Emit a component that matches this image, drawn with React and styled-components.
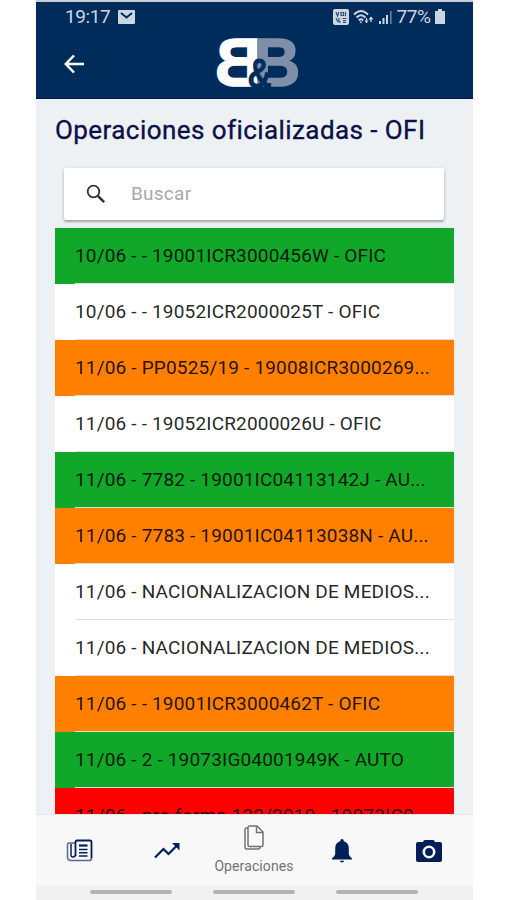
import React from 'react';
import styled, { createGlobalStyle, css } from 'styled-components';

const GlobalStyle = createGlobalStyle`
  * {
    box-sizing: border-box;
  }

  body {
    margin: 0;
    background: #ffffff;
    font-family: Roboto, 'Liberation Sans', sans-serif;
  }
`;

const Screen = styled.div`
  display: flex;
  flex-direction: column;
  width: 437px;
  height: 900px;
  margin-left: 36px;
  overflow: hidden;
  background: #eef1f4;
`;

const Header = styled.header`
  flex: none;
  height: 99px;
  background: #002c5c;
  border-top: 2px solid #c9cdd3;
  border-bottom: 1px solid #0a1550;
`;

const StatusBar = styled.div`
  display: flex;
  justify-content: space-between;
  align-items: center;
  height: 29px;
  padding: 0 28px 0 29px;
  color: #ccd5e2;
  font-size: 19px;
`;

const StatusGroup = styled.div`
  display: flex;
  align-items: center;
  gap: ${({ $gap }) => $gap}px;
`;

const Clock = styled.span`
  letter-spacing: -0.4px;
`;

const Toolbar = styled.div`
  display: grid;
  grid-template-columns: 1fr auto 1fr;
  align-items: center;
  height: 66px;
  padding: 0 24px 0 27px;
`;

const BackButton = styled.button`
  display: flex;
  padding: 0;
  border: 0;
  background: none;
`;

const LogoMark = styled.svg`
  overflow: visible;
  font-family: 'Liberation Sans', sans-serif;
  font-weight: 700;
`;

const Content = styled.main`
  flex: 1;
  min-height: 0;
  padding: 0 19px;
  overflow: hidden;
`;

const Title = styled.h1`
  margin: 0;
  height: 69px;
  padding-top: 15px;
  color: #0b1148;
  font-size: 26px;
  font-weight: 400;
  line-height: 32px;
  letter-spacing: 0.43px;
  -webkit-text-stroke: 0.35px #0b1148;
  white-space: nowrap;
`;

const SearchBox = styled.label`
  display: flex;
  align-items: center;
  gap: 25px;
  height: 52px;
  margin: 0 10px 8px 9px;
  padding-left: 22px;
  background: #ffffff;
  border-radius: 2px;
  box-shadow: 0 2px 2px rgba(0, 0, 0, 0.24), 0 1px 4px rgba(0, 0, 0, 0.14);
`;

const SearchInput = styled.input`
  flex: 1;
  min-width: 0;
  padding: 0 0 1px;
  border: 0;
  outline: 0;
  background: none;
  font-family: inherit;
  font-size: 19px;
  letter-spacing: 0.25px;

  &::placeholder {
    color: #a9a9a9;
    opacity: 1;
  }
`;

const List = styled.ul`
  margin: 0;
  padding: 0;
  list-style: none;
`;

const rowColors = {
  green: '#11a829',
  orange: '#ff8000',
  red: '#ff0000',
  white: '#ffffff',
};

const Row = styled.li`
  height: 56px;
  padding-left: 20px;
  background: ${({ $status }) => rowColors[$status]};
`;

const RowLabel = styled.div`
  height: 56px;
  border-bottom: 1px solid #dedede;
  color: rgba(0, 0, 0, 0.87);
  font-size: 19px;
  line-height: 55px;
  letter-spacing: 0.18px;
  white-space: nowrap;
`;

const TabBar = styled.nav`
  flex: none;
  display: grid;
  grid-template-columns: repeat(5, 1fr);
  height: 72px;
  background: #f8f8f8;
  border-top: 1px solid #e4e5e7;
`;

const Tab = styled.button`
  display: flex;
  flex-direction: column;
  align-items: center;
  justify-content: center;
  padding: 0;
  border: 0;
  background: none;
  color: #001f56;
  font-family: inherit;

  ${({ $active }) =>
    $active &&
    css`
      justify-content: flex-start;
      padding: 10px 1px 0 0;
      gap: 7px;
      color: #737373;
    `}
`;

const TabLabel = styled.span`
  font-size: 14px;
  line-height: 18px;
  letter-spacing: 0.1px;
`;

const SystemNav = styled.div`
  flex: none;
  display: flex;
  justify-content: center;
  gap: 41px;
  height: 14px;
  padding: 4px 1px 0 0;
  background: #f1f1f1;
`;

const NavHandle = styled.span`
  width: 82px;
  height: 4px;
  border-radius: 2px;
  background: #b3b3b3;
`;

const operations = [
  { status: 'green', text: '10/06 - - 19001ICR3000456W - OFIC' },
  { status: 'white', text: '10/06 - - 19052ICR2000025T - OFIC' },
  { status: 'orange', text: '11/06 - PP0525/19 - 19008ICR3000269...' },
  { status: 'white', text: '11/06 - - 19052ICR2000026U - OFIC' },
  { status: 'green', text: '11/06 - 7782 - 19001IC04113142J - AU...' },
  { status: 'orange', text: '11/06 - 7783 - 19001IC04113038N - AU...' },
  { status: 'white', text: '11/06 - NACIONALIZACION DE MEDIOS...' },
  { status: 'white', text: '11/06 - NACIONALIZACION DE MEDIOS...' },
  { status: 'orange', text: '11/06 - - 19001ICR3000462T - OFIC' },
  { status: 'green', text: '11/06 - 2 - 19073IG04001949K - AUTO' },
  { status: 'red', text: '11/06 - pro forma 132/2019 - 19073IC0' },
];

const MailIcon = () => (
  <svg width="17" height="14" viewBox="0 0 17 14">
    <rect width="17" height="14" rx="1" fill="#ccd5e2" />
    <path d="M3 3l5.5 4.5L14 3" fill="none" stroke="#002c5c" strokeWidth="2" />
  </svg>
);

const VolteIcon = () => (
  <svg width="16" height="16" viewBox="0 0 16 16">
    <rect width="16" height="16" rx="2" fill="#ccd5e2" />
    <g fill="none" stroke="#31527b" strokeWidth="1.2">
      <path d="M3 3l1.5 4L6 3M8 3.5h2.5v3H8zM12.5 3v4M3 9l2 4M6 9v4h2M9.5 9.5h4M10 11.5h3M10 13.3h3" />
    </g>
  </svg>
);

const WifiIcon = () => (
  <svg width="21" height="16" viewBox="0 0 21 16">
    <g fill="none" stroke="#ccd5e2" strokeWidth="1.9">
      <path d="M1 5.5q7-7 14 0M3.5 8.5q4.5-4.5 9 0M5.8 11.2q2.2-2 4.4 0" />
    </g>
    <path d="M6.5 12.5h3L8 14.5z" fill="#ccd5e2" />
    <path d="M13.5 9v5M18 8v5" stroke="#ccd5e2" strokeWidth="1.3" />
    <path d="M15.5 10.5h5L18 7.5zM11.5 11.5h4L13.5 14z" fill="#ccd5e2" />
  </svg>
);

const SignalIcon = () => (
  <svg width="13" height="14" viewBox="0 0 13 14">
    <path d="M1 11v3M4.5 8v6M8 5v9" stroke="#ccd5e2" strokeWidth="2" />
    <path d="M11.8 1v13" stroke="#71859f" strokeWidth="1.5" />
  </svg>
);

const BatteryIcon = () => (
  <svg width="10" height="15" viewBox="0 0 10 15">
    <path d="M3 0h4v2h3v13H0V2h3z" fill="#ccd5e2" />
  </svg>
);

const BackIcon = () => (
  <svg width="22" height="22" viewBox="0 0 22 22">
    <path d="M11 2.5L2.8 11l8.2 8.5M3 11h18" fill="none" stroke="#fff" strokeWidth="2.5" />
  </svg>
);

const Logo = () => (
  <LogoMark width="92" height="58" viewBox="0 0 92 58">
    <g fontSize="69" strokeWidth="1.6">
      <text transform="translate(51.4 50.7) scale(-0.94 1)" fill="#fff" stroke="#fff">B</text>
      <text transform="translate(43.6 50.7) scale(0.94 1)" fill="#7f8fa9" stroke="#7f8fa9">B</text>
    </g>
    <text
      transform="translate(37.5 52.5) scale(0.78 1)"
      fontSize="43"
      fill="#002c5c"
      stroke="#002c5c"
      strokeWidth="0.8"
    >
      &amp;
    </text>
  </LogoMark>
);

const SearchIcon = () => (
  <svg width="20" height="20" viewBox="0 0 20 20">
    <circle cx="7.5" cy="7.5" r="5.8" fill="none" stroke="#333" strokeWidth="1.8" />
    <path d="M11.8 11.8l6.4 6.4" stroke="#333" strokeWidth="2.6" />
  </svg>
);

const NewsIcon = () => (
  <svg width="27" height="23" viewBox="0 0 27 23" fill="none" stroke="currentColor">
    <path d="M9.5 4H3Q1.5 4 1.5 5.5V18q0 3.5 3.500 3.500" stroke="#59678f" strokeWidth="1.5" />
    <path d="M5 5v11q0 2 2 2t2.5-2" strokeWidth="1.5" />
    <path d="M5 21.5h18q2.5 0 2.5-2.5" stroke="#59678f" strokeWidth="1.7" />
    <path d="M9.5 17V3q0-1.5 1.5-1.5h13q1.5 0 1.5 1.5v16" strokeWidth="1.8" />
    <path d="M13 6.5h8.5" strokeWidth="2.2" />
    <path d="M13 10.5h8.5M13 13.8h8.5M13 17h8.5" strokeWidth="1.5" />
  </svg>
);

const TrendIcon = () => (
  <svg width="26" height="16" viewBox="0 0 26 16">
    <path d="M1 14.5l8.5-8.5 5 5L23 2.5" fill="none" stroke="currentColor" strokeWidth="2.2" />
    <path d="M18 0h7.5v7.5z" fill="currentColor" />
  </svg>
);

const DocumentsIcon = () => (
  <svg width="20" height="25" viewBox="0 0 20 25" fill="none" stroke="currentColor" strokeWidth="1.5">
    <path d="M4 3H2.5Q1 3 1 4.5v18Q1 24 2.5 24h12q1.5 0 1.5-2" />
    <path d="M5.5 1H13l6 6v13q0 1.5-1.5 1.5h-12Q4 21.5 4 20V2.5Q4 1 5.5 1z" />
    <path d="M12.5 1v6.5H19" />
  </svg>
);

const BellIcon = () => (
  <svg width="20" height="24" viewBox="0 0 20 24" fill="currentColor">
    <path d="M10 0q1.8 0 1.8 2.2 5 1.3 5 7.3v5.5q0 2 3.2 4.5v1H0v-1q3.2-2.5 3.2-4.5V9.5q0-6 5-7.3Q8.2 0 10 0zM7.8 21.7h4.4Q11.8 23.5 10 23.5t-2.2-1.8z" />
  </svg>
);

const CameraIcon = () => (
  <svg width="26" height="22" viewBox="0 0 26 22">
    <path d="M7 2q.5-2 2-2h8q1.5 0 2 2h5q2 0 2 2v16q0 2-2 2H2q-2 0-2-2V4q0-2 2-2z" fill="currentColor" />
    <circle cx="13" cy="12" r="5.2" fill="none" stroke="#f8f8f8" strokeWidth="2.6" />
  </svg>
);

const App = () => {
  return (
    <>
      <GlobalStyle />
      <Screen>
        <Header>
          <StatusBar>
            <StatusGroup $gap={8}>
              <Clock>19:17</Clock>
              <MailIcon />
            </StatusGroup>
            <StatusGroup $gap={4.5}>
              <VolteIcon />
              <WifiIcon />
              <SignalIcon />
              <Clock>77%</Clock>
              <BatteryIcon />
            </StatusGroup>
          </StatusBar>
          <Toolbar>
            <BackButton aria-label="Volver">
              <BackIcon />
            </BackButton>
            <Logo />
          </Toolbar>
        </Header>

        <Content>
          <Title>Operaciones oficializadas - OFI</Title>
          <SearchBox>
            <SearchIcon />
            <SearchInput placeholder="Buscar" />
          </SearchBox>
          <List>
            {operations.map((operation, index) => (
              <Row key={index} $status={operation.status}>
                <RowLabel>{operation.text}</RowLabel>
              </Row>
            ))}
          </List>
        </Content>

        <TabBar>
          <Tab><NewsIcon /></Tab>
          <Tab><TrendIcon /></Tab>
          <Tab $active>
            <DocumentsIcon />
            <TabLabel>Operaciones</TabLabel>
          </Tab>
          <Tab><BellIcon /></Tab>
          <Tab><CameraIcon /></Tab>
        </TabBar>
        <SystemNav>
          <NavHandle />
          <NavHandle />
          <NavHandle />
        </SystemNav>
      </Screen>
    </>
  );
};

export default App;
